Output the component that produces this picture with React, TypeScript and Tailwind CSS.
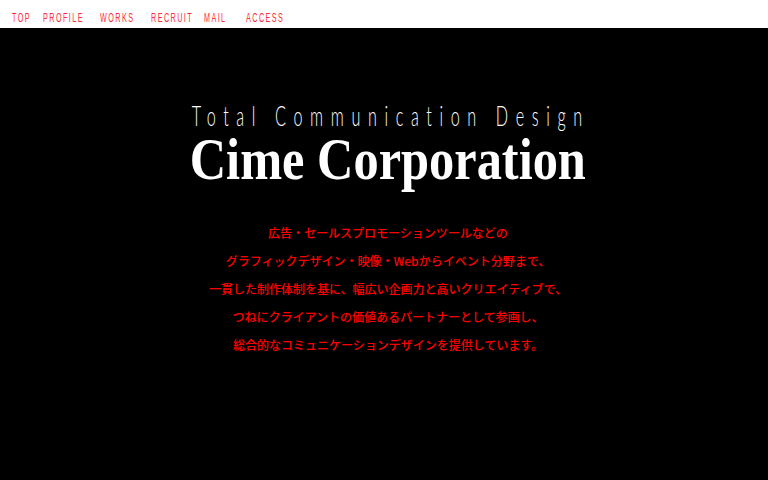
const navItems = [
  { label: "TOP", w: "w-[31px]" },
  { label: "PROFILE", w: "w-[57px]" },
  { label: "WORKS", w: "w-[51px]" },
  { label: "RECRUIT", w: "w-[53px]" },
  { label: "MAIL", w: "w-[42px]" },
  { label: "ACCESS", w: "w-[40px]" },
];

const lines = [
  "広告・セールスプロモーションツールなどの",
  "グラフィックデザイン・映像・Webからイベント分野まで、",
  "一貫した制作体制を基に、幅広い企画力と高いクリエイティブで、",
  "つねにクライアントの価値あるパートナーとして参画し、",
  "総合的なコミュニケーションデザインを提供しています。",
];

export default function App() {
  return (
    <div className="w-[768px] h-[480px] bg-black flex flex-col overflow-hidden">
      <nav className="h-[28px] shrink-0 bg-white flex items-center pl-[12px] pt-[3px]">
        {navItems.map((item) => (
          <a key={item.label} href="#" className={`${item.w} block`}>
            <span className="inline-block origin-left scale-x-[0.6] whitespace-nowrap text-[12px] leading-none tracking-[0.2em] text-[#ff2a3a] [font-family:'Liberation_Sans',sans-serif]">
              {item.label}
            </span>
          </a>
        ))}
      </nav>
      <main className="flex flex-col items-center pl-[8px]">
        <h2 className="mt-[74px] mr-[-0.2em] scale-x-[0.6] whitespace-nowrap text-[27px] leading-none font-light tracking-[0.47em] text-white [font-family:'Lato',sans-serif]">
          Total Communication Design
        </h2>
        <h1 className="scale-x-[0.84] whitespace-nowrap text-[60px] leading-none font-bold text-white [font-family:'Liberation_Serif',serif]">
          Cime Corporation
        </h1>
        <div className="mt-[30px] flex flex-col items-center text-[12px] leading-[28px] font-medium text-[#ff0000] [font-family:'Noto_Sans_CJK_JP',sans-serif]">
          {lines.map((l) => (
            <p key={l}>{l}</p>
          ))}
        </div>
      </main>
    </div>
  );
}
